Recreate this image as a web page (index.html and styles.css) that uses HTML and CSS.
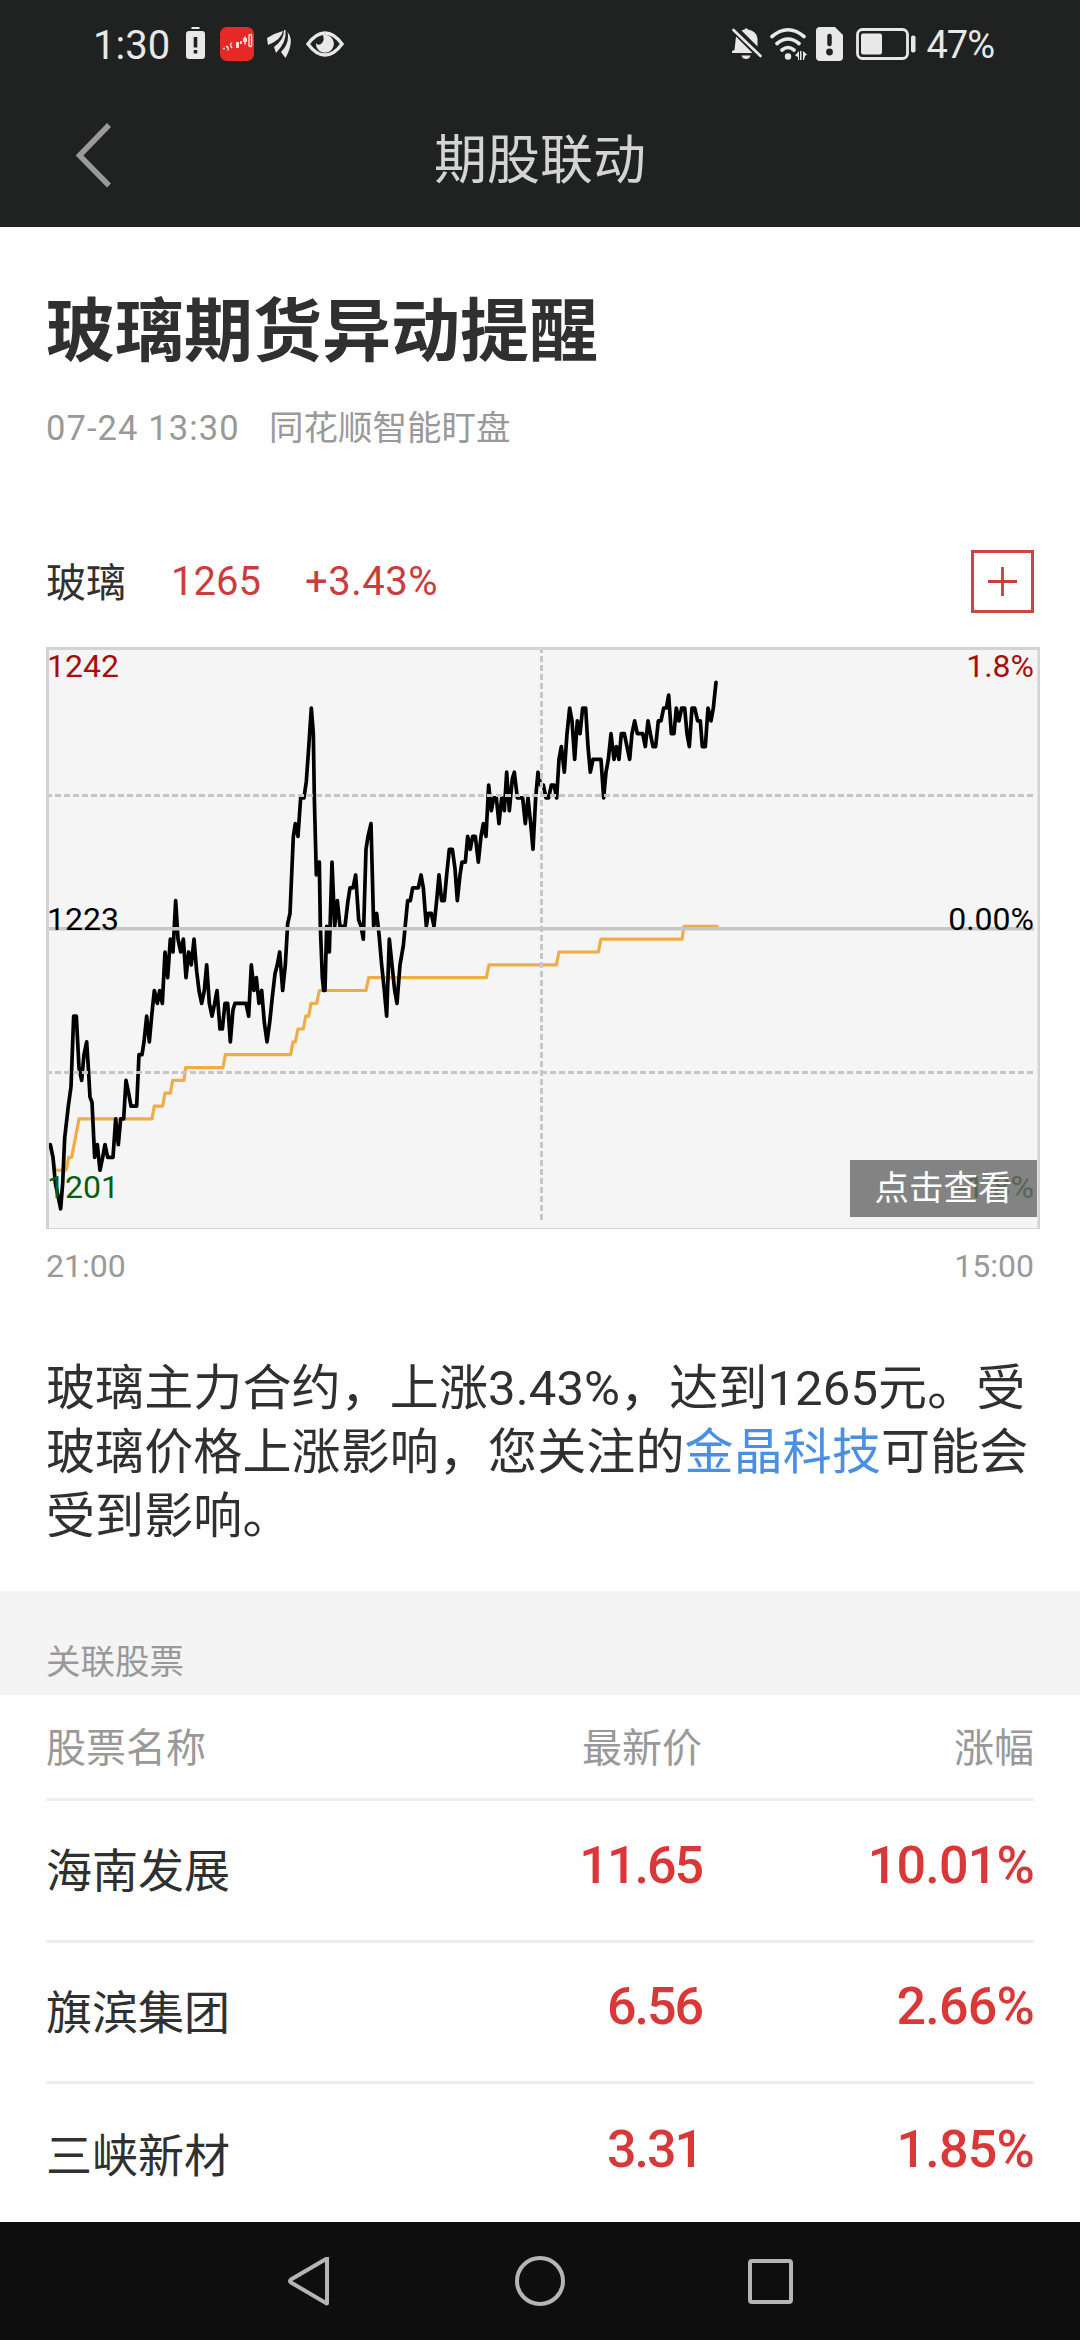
FILE: index.html
```html
<!DOCTYPE html>
<html lang="zh-CN">
<head>
    <meta charset="UTF-8">
    <meta name="viewport" content="width=device-width, initial-scale=1.0">
    <title>期股联动</title>
    <link rel="stylesheet" href="styles.css">
</head>
<body>
    <header>
        <div class="status-bar">
            <div class="status-left">
                <span class="clock">1:30</span>
                <svg class="icon-alert" width="19" height="33" viewBox="0 0 19 33">
                    <path d="M5.500 0h8v2H5.500zM3 4h13a3 3 0 0 1 3 3v22a3 3 0 0 1-3 3H3a3 3 0 0 1-3-3V7a3 3 0 0 1 3-3z" fill="#e8e8e8"/>
                    <path d="M9.500 10v10.500M9.500 23v3.500" stroke="#202221" stroke-width="3.600"/>
                </svg>
                <svg class="icon-app" width="34" height="34" viewBox="0 0 34 34">
                    <rect width="34" height="34" rx="7" fill="#e62828"/>
                    <g fill="none" stroke="#fbd9cf" stroke-width="1.500">
                        <path d="M3 21.500h2M6 19.500q3 0 2 4M12 16q-3 1 0 5M25 9.500v8"/>
                        <rect x="29" y="7.500" width="2.600" height="12" rx="1"/>
                    </g>
                    <path d="M16 15h3v6h-3zM20 14h2v3h-2zM23 11h4v4h-4z" fill="#fbd9cf"/>
                </svg>
                <svg class="icon-fan" width="24" height="28" viewBox="0 0 24 28" fill="#e8e8e8">
                    <path d="M0 8Q8 3 16 1Q14 10 1 15z"/>
                    <path d="M17 0h1.500Q20 12 9 23L7 17Q17 10 17 0z"/>
                    <path d="M20.500 2Q28 11 18.500 28L14 22Q23 13 20.500 2z"/>
                </svg>
                <svg class="icon-eye" width="38" height="26" viewBox="0 0 38 26">
                    <path d="M2 13Q10 2 19 2t17 11Q28 24 19 24T2 13z" fill="none" stroke="#e8e8e8" stroke-width="3.400"/>
                    <path d="M17 4a9 9 0 1 1-7 8q2 3 5 1 4-3 2-9z" fill="#e8e8e8"/>
                </svg>
            </div>
            <div class="status-right">
                <svg class="icon-bell" width="30" height="34" viewBox="0 0 30 34" fill="#e8e8e8">
                    <path d="M4 9.500L20.500 26H0v-2l2.500-1z"/>
                    <path d="M9.500 3.500l3-1q1.500-2.500 3.500 0 9 2 9.500 9v8z"/>
                    <path d="M1.500 3l27 26" stroke="#e8e8e8" stroke-width="2.600" stroke-linecap="round"/>
                    <path d="M9.500 28.500h9q-1 3.500-4.500 3.500t-4.500-3.500z"/>
                </svg>
                <svg class="icon-wifi" width="38" height="34" viewBox="0 0 38 34" fill="none" stroke="#e8e8e8" stroke-width="3.600" stroke-linecap="round">
                    <path d="M2 9.500Q18-4 34 9.500M7 16.500q11-9 22 0M12 23q6-5 12 0"/>
                    <circle cx="18" cy="29.500" r="3.200" fill="#e8e8e8" stroke="none"/>
                    <path d="M29 24v9h-1v-3l-3-1.500zM33 24l4 3.500-2 1.500-1 4h-1zM30 24h1.500v9H30z" fill="#e8e8e8" stroke="none"/>
                </svg>
                <svg class="icon-sim" width="27" height="34" viewBox="0 0 27 34">
                    <path d="M4 0h15l8 8v22a4 4 0 0 1-4 4H4a4 4 0 0 1-4-4V4a4 4 0 0 1 4-4z" fill="#e8e8e8"/>
                    <path d="M13.500 9v8" stroke="#202221" stroke-width="4.500" stroke-linecap="round"/>
                    <circle cx="13.500" cy="25" r="3.400" fill="#202221"/>
                </svg>
                <svg class="icon-battery" width="60" height="32" viewBox="0 0 60 32">
                    <rect x="1.500" y="1.500" width="50" height="29" rx="5" fill="none" stroke="#e8e8e8" stroke-width="2.800"/>
                    <rect x="5" y="5.500" width="21" height="21" rx="2" fill="#e8e8e8"/>
                    <rect x="55" y="7.500" width="4.500" height="17" rx="2" fill="#e8e8e8"/>
                </svg>
                <span class="percent">47%</span>
            </div>
        </div>
        <div class="title-bar">
            <svg class="back" width="36" height="66" viewBox="0 0 36 66">
                <path d="M34 2L4.500 32.500l29.500 30" fill="none" stroke="#9a9a9a" stroke-width="5.500"/>
            </svg>
            <div class="page-title">期股联动</div>
        </div>
    </header>

    <main>
        <h1>玻璃期货异动提醒</h1>
        <div class="meta"><span class="date">07-24 13:30</span><span>同花顺智能盯盘</span></div>

        <div class="quote">
            <span class="quote-name">玻璃</span>
            <span class="quote-price">1265</span>
            <span class="quote-rate">+3.43%</span>
            <button type="button" class="add-btn">
                <svg width="29" height="29" viewBox="0 0 29 29"><path d="M0 14.500h29M14.500 0v29" stroke="#cb3d3d" stroke-width="2.800"/></svg>
            </button>
        </div>

        <div class="chart">
            <svg class="chart-svg" width="994" height="582" viewBox="46 647 994 582">
                <!-- one unit on y is one price tick -->
                <g transform="translate(30 926.3) scale(.33333 -12.84)" class="curves">
                    <polyline class="avg" points="61,-17 68,-18 76,-19 108,-19 116,-18 125,-18 147,-15 366,-15 373,-14 398,-14 405,-13 421,-13 428,-12 462,-12 467,-11 579,-11 586,-10 782,-10 789,-9 796,-9 804,-8 820,-8 827,-7 836,-7 843,-6 860,-6 868,-5 1008,-5 1016,-4 1369,-4 1377,-3 1579,-3 1587,-2 1705,-2 1713,-1 1956,-1 1962,0 2062,0"/>
                    <polyline class="price" points="61,-17 69,-18 76,-20 84,-21 92,-22 98,-20 104,-16.5 115,-14 123,-12.5 131,-7 139,-7 147,-11 155,-12 162,-10 170,-9 175,-11 180,-13.3 186,-13.7 194,-18 202,-17 210,-19 218,-18 225,-17 233,-18 249,-18 257,-15 265,-17 272,-15 281,-15 288,-12 296,-13 303,-14 320,-14 327,-10 336,-10 342,-9 350,-7 358,-9 365,-7 373,-5 382,-6 389,-5 397,-6 405,-2 413,-4 421,-1 429,-2 437,2 444,-1 452,-2 460,-1 468,-4 476,-2 484,-3 492,-1 500,-3.5 507,-5 515,-6 523,-5 530,-3 538,-6 546,-7 554,-6 561,-5 570,-8 577,-8 585,-6 593,-6 601,-9 609,-6.5 615,-6 648,-6 656,-7 664,-3 672,-5 679,-4 687,-6 695,-5 703,-7.5 711,-9 719,-7.5 727,-5.5 735,-3.7 742,-3 749,-2 758,-5 766,-3 773,.2 780,1 790,7 796,8 804,7 812,10 822,10 829,11.3 835,13.5 844,17 850,15 853,10 859,4 868,5 871,0 877,-4 881,-5 885,-5 890,0 898,-2 906,5 914,0 922,2 930,0 945,0 953,1.8 960,3 969,3 977,4 986,.5 993,0 1000,-1 1008,6 1014,7 1023,8 1031,0 1040,1 1047,-.6 1055,-3 1063,-5 1070,-7 1078,-1 1086,-3 1094,-5 1101,-6 1110,-3 1120,-1.5 1133,2 1141,2 1148,3 1165,3 1173,4 1180,3 1189,0 1195,1 1204,1 1212,0 1220,2 1227,4 1235,2 1243,2 1250,4 1258,6 1267,6 1275,4.5 1282,2 1290,4 1296,5 1306,5 1313,7 1321,6 1328,7 1336,7 1345,5 1353,7 1360,8 1368,7 1376,11 1384,9 1391,10 1399,10 1407,8 1415,10 1423,9 1430,12 1438,9 1447,11.5 1453,12 1462,10 1478,10 1486,8 1494,10 1502,8 1509,6 1517,10 1524,12 1532,11 1540,11 1548,10 1556,10 1564,11 1572,11 1580,10 1587,13 1594,14 1603,12 1611,15 1619,17 1626,16 1634,13 1642,16 1650,15 1658,17 1667,17 1674,14 1681,12 1689,13 1713,13 1721,10 1728,12 1735,13 1743,15 1752,13 1759,14 1767,13 1774,15 1783,15 1791,14 1799,13 1806,15 1814,16 1822,15 1838,15 1846,14 1854,16 1861,15 1869,14 1877,14 1885,16 1893,16 1901,17 1909,17 1916,18 1924,15 1932,15 1939,17 1947,16 1955,17 1964,17 1971,15 1978,14 1986,17 1994,17 2003,16 2011,16 2017,14 2026,14 2034,17 2043,16 2050,17 2058,19"/>
                </g>
                <g class="grid">
                    <path class="dash" d="M46 795.5H1034M46 1072.5H1034M541.5 647V1220"/>
                    <path class="base" d="M46 928.7H1034"/>
                </g>
                <path d="M47.500 1229V648.500H1039V1229" fill="none" stroke="#d3d3d3" stroke-width="3"/>
                <path d="M46 1228.500H1040" stroke="#d3d3d3"/>
                <g class="axis">
                    <text x="47" y="677" class="up">1242</text>
                    <text x="47" y="930">1223</text>
                    <text x="47" y="1198" class="down">1201</text>
                    <text x="1034" y="677" class="up end">1.8%</text>
                    <text x="1034" y="930" class="end">0.00%</text>
                    <text x="1034" y="1198" class="down end">-1.8%</text>
                </g>
            </svg>
            <div class="view-btn">点击查看</div>
        </div>
        <div class="times"><span>21:00</span><span>15:00</span></div>

        <p class="summary">玻璃主力合约，上涨3.43%，达到1265元。受玻璃价格上涨影响，您关注的<a class="stock-link">金晶科技</a>可能会受到影响。</p>
    </main>

    <div class="section-head">关联股票</div>
    <div class="stocks">
        <div class="row row-head"><span>股票名称</span><span>最新价</span><span>涨幅</span></div>
        <div class="row"><span>海南发展</span><span class="num price">11.65</span><span class="num">10.01%</span></div>
        <div class="row"><span>旗滨集团</span><span class="num price">6.56</span><span class="num">2.66%</span></div>
        <div class="row"><span>三峡新材</span><span class="num price">3.31</span><span class="num">1.85%</span></div>
    </div>

    <footer>
        <svg width="50" height="54" viewBox="0 0 50 54"><path d="M42 5v44q0 1-1 0L6 28.500q-2-1.500 0-3L41 5z"/></svg>
        <svg width="54" height="54" viewBox="0 0 54 54"><circle cx="27" cy="27" r="23"/></svg>
        <svg width="50" height="54" viewBox="0 0 50 54"><rect x="5" y="7" width="41" height="41" rx="2"/></svg>
    </footer>
</body>
</html>
```
FILE: styles.css
```css
* {
    box-sizing: border-box;
}
body {
    margin: 0;
    width: 1080px;
    height: 2340px;
    display: flex;
    flex-direction: column;
    overflow: hidden;
    background: #fefefe;
    color: #303030;
    font-family: Roboto, "Noto Sans CJK SC", sans-serif;
}
header {
    height: 227px;
    background: #202221;
}
.status-bar {
    height: 87px;
    display: flex;
    justify-content: space-between;
    padding: 0 86px 0 93px;
    color: #e8e8e8;
}
.status-left, .status-right {
    display: flex;
    align-items: center;
}
.clock {
    font-size: 40px;
    width: 93px;
    padding-top: 4px;
}
.icon-app {
    margin-left: 15px;
}
.icon-fan {
    margin-left: 13px;
}
.icon-eye {
    margin-left: 15px;
}
.icon-wifi {
    margin-left: 8px;
}
.icon-sim {
    margin-left: 8px;
}
.icon-battery {
    margin-left: 13px;
}
.percent {
    font-size: 38px;
    margin-left: 10px;
    padding-top: 3px;
    letter-spacing: -1px;
}
.title-bar {
    display: flex;
    align-items: center;
    height: 138px;
    padding: 0 75px;
}
.page-title {
    flex: 1;
    margin-right: 36px;
    text-align: center;
    font-size: 53px;
    color: #d4d4d4;
}
main {
    height: 1364px;
    padding: 0 40px 0 46px;
}
h1 {
    margin: 56px 0 0;
    height: 100px;
    line-height: 100px;
    font-size: 69px;
    font-weight: bold;
}
.meta {
    margin-top: 20px;
    height: 50px;
    line-height: 50px;
    font-size: 34.5px;
    color: #999;
}
.date {
    display: inline-block;
    width: 223px;
    letter-spacing: 1.1px;
}
.quote {
    display: flex;
    align-items: center;
    height: 63px;
    margin: 97px 6px 34px 0;
    font-size: 40px;
}
.quote-name {
    width: 125px;
    padding-bottom: 4px;
}
.quote-price {
    width: 134px;
    color: #cb3d3d;
}
.quote-rate {
    letter-spacing: 0.5px;
    color: #cb3d3d;
}
.add-btn {
    margin-left: auto;
    width: 63px;
    height: 63px;
    padding: 0;
    display: flex;
    align-items: center;
    justify-content: center;
    background: none;
    border: 3px solid #cb4545;
}
.chart {
    position: relative;
    height: 582px;
    background: #f5f5f5;
}
.chart-svg {
    display: block;
}
.curves polyline {
    fill: none;
    stroke-width: 3.7;
    stroke-linejoin: round;
    stroke-linecap: round;
    vector-effect: non-scaling-stroke;
}
.curves .avg {
    stroke: #efac47;
    stroke-width: 3.2;
}
.curves .price {
    stroke: #000;
}
.grid path {
    fill: none;
    stroke: #c6c6c6;
    stroke-width: 3;
}
.grid .dash {
    stroke-dasharray: 6 3;
}
.grid .base {
    stroke-width: 3.5;
}
.axis text {
    font-size: 32px;
    fill: #000;
}
.axis .up {
    fill: #a90c0c;
}
.axis .down {
    fill: #065f0f;
}
.axis .end {
    text-anchor: end;
}
.view-btn {
    position: absolute;
    right: 3px;
    bottom: 12px;
    width: 187px;
    height: 57px;
    line-height: 56px;
    text-align: center;
    font-size: 34.5px;
    color: #fff;
    background: rgba(102, 102, 102, 0.8);
}
.times {
    display: flex;
    justify-content: space-between;
    margin: 17px 6px 0 0;
    line-height: 40px;
    font-size: 32px;
    color: #999;
}
.summary {
    margin: 71px 0 0;
    line-height: 64px;
    font-size: 49px;
    letter-spacing: 0.12px;
}
.stock-link {
    color: #4a90e2;
}
.section-head {
    height: 104px;
    padding: 46px 46px 0;
    line-height: 50px;
    font-size: 34.5px;
    color: #999;
    background: #f4f4f4;
}
.stocks {
    padding: 0 46px;
    height: 527px;
}
.row {
    display: grid;
    grid-template-columns: 323px 333px 332px;
    align-items: center;
    height: 141.5px;
    border-bottom: 3px solid #ededed;
    font-size: 46px;
}
.row:last-child {
    border-bottom: none;
}
.row span {
    padding-bottom: 6px;
}
.row span + span {
    text-align: right;
}
.row-head {
    height: 106px;
    font-size: 40px;
    color: #999;
}
.row-head span {
    padding-bottom: 4px;
}
.row .num {
    padding-bottom: 10px;
    font-size: 52px;
    font-weight: 500;
    letter-spacing: -0.8px;
    color: #d93838;
}
.row .price {
    letter-spacing: -2px;
}
footer {
    height: 118px;
    display: flex;
    justify-content: center;
    align-items: center;
    gap: 178px;
    background: #0e0e0e;
}
footer svg {
    fill: none;
    stroke: #b5b5b5;
    stroke-width: 4;
}
```
